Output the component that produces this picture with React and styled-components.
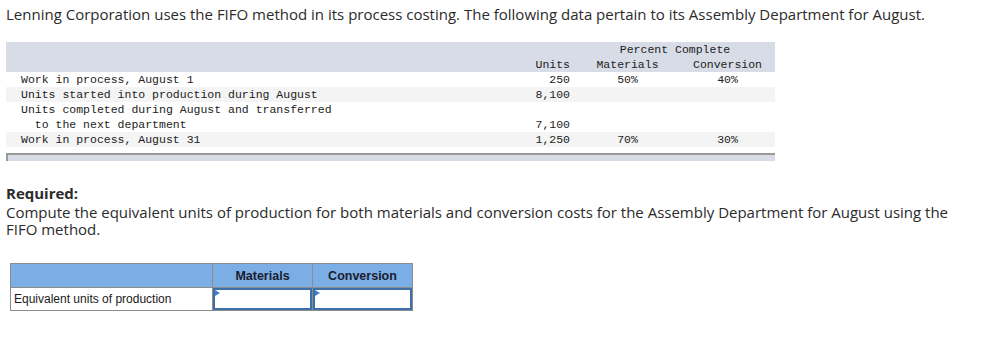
import styled, { createGlobalStyle } from "styled-components";

const Global = createGlobalStyle`
  body {
    margin: 0;
    background: #fff;
  }
`;

const Page = styled.div`
  padding: 6px 12px 0 6px;
  width: 969px;
  font-family: "Open Sans", "Noto Sans", sans-serif;
  color: #2b2b2b;
`;

const Para = styled.p`
  margin: 0;
  font-size: 15px;
  line-height: 17px;
`;

const Data = styled.table`
  margin-top: 19px;
  width: 769px;
  border-collapse: collapse;
  font-family: "Liberation Mono", "DejaVu Sans Mono", monospace;
  font-size: 11.5px;
  color: #222;
  table-layout: fixed;
`;

const HeadRow = styled.tr`
  background: #d7dce6;
`;

const Row = styled.tr`
  background: ${(p) => (p.$shade ? "#f4f4f4" : "#fff")};
`;

const Cell = styled.td`
  height: 15px;
  line-height: 15px;
  padding: 0;
  white-space: pre;
  text-align: ${(p) => p.$align || "left"};
  padding-left: ${(p) => (p.$indent ? `${p.$indent}px` : "0")};
  padding-right: ${(p) => (p.$right ? `${p.$right}px` : "0")};
  vertical-align: bottom;
`;

const Bar = styled.div`
  margin-top: 6px;
  width: 767px;
  height: 6px;
  background: #d7dce6;
  border-top: 2px solid #9a9a9a;
  border-left: 2px solid #9a9a9a;
`;

const Required = styled.div`
  margin-top: 24px;
`;

const Strong = styled.p`
  margin: 0 0 2px;
  font-size: 15px;
  line-height: 17px;
  font-weight: 700;
`;

const Answer = styled.table`
  margin: 25px 0 0 4px;
  border-collapse: collapse;
  font-family: "Liberation Sans", Arial, sans-serif;
  font-size: 12px;
  color: #1a1a1a;
`;

const Th = styled.th`
  width: ${(p) => p.$w}px;
  height: 23px;
  padding: 0;
  background: #7aaee4;
  border: 1px solid #8c8c8c;
  font-weight: 700;
  color: #1c1c30;
  font-size: 12.5px;
`;

const Label = styled.td`
  height: 22px;
  padding: 0 0 0 3px;
  border: 1px solid #8c8c8c;
  text-align: left;
`;

const InputCell = styled.td`
  position: relative;
  padding: 0;
  border: 1px solid #8c8c8c;
  box-shadow: inset 0 0 0 2px #3d6fa8;
  &::before {
    content: "";
    position: absolute;
    left: 2px;
    top: 2px;
    border-top: 3.5px solid transparent;
    border-bottom: 3.5px solid transparent;
    border-left: 5px solid #3d7fd0;
  }
`;

const rows = [
  { label: "Work in process, August 1", units: "250", mat: "50%", conv: "40%" },
  { label: "Units started into production during August", units: "8,100", shade: true },
  { label: "Units completed during August and transferred" },
  { label: "  to the next department", units: "7,100" },
  { label: "Work in process, August 31", units: "1,250", mat: "70%", conv: "30%", shade: true },
];

export default function App() {
  return (
    <Page>
      <Global />
      <Para>
        Lenning Corporation uses the FIFO method in its process costing. The following data pertain to its
        Assembly Department for August.
      </Para>

      <Data>
        <colgroup>
          <col style={{ width: 514 }} />
          <col style={{ width: 55 }} />
          <col style={{ width: 105 }} />
          <col style={{ width: 95 }} />
        </colgroup>
        <tbody>
          <HeadRow>
            <Cell />
            <Cell />
            <Cell colSpan={2} $align="center">
              Percent Complete
            </Cell>
          </HeadRow>
          <HeadRow>
            <Cell />
            <Cell $align="right" $right={5}>Units</Cell>
            <Cell $align="center">Materials</Cell>
            <Cell $align="center">Conversion</Cell>
          </HeadRow>
          {rows.map((r) => (
            <Row key={r.label} $shade={r.shade}>
              <Cell $indent={15}>{r.label}</Cell>
              <Cell $align="right" $right={5}>{r.units}</Cell>
              <Cell $align="center">{r.mat}</Cell>
              <Cell $align="center">{r.conv}</Cell>
            </Row>
          ))}
        </tbody>
      </Data>
      <Bar />

      <Required>
        <Strong>Required:</Strong>
        <Para>
          Compute the equivalent units of production for both materials and conversion costs for the Assembly
          Department for August using the FIFO method.
        </Para>
      </Required>

      <Answer>
        <thead>
          <tr>
            <Th $w={201} />
            <Th $w={99}>Materials</Th>
            <Th $w={99}>Conversion</Th>
          </tr>
        </thead>
        <tbody>
          <tr>
            <Label>Equivalent units of production</Label>
            <InputCell />
            <InputCell />
          </tr>
        </tbody>
      </Answer>
    </Page>
  );
}
